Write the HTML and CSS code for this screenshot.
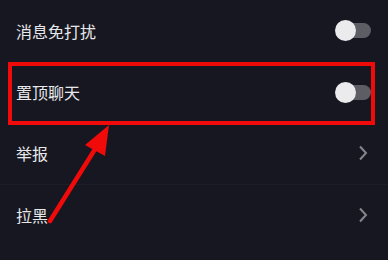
FILE: index.html
```html
<!DOCTYPE html>
<html lang="zh">
<head>
<meta charset="utf-8">
<link rel="stylesheet" href="styles.css">
</head>
<body>
<div class="screen">
  <div class="list">
    <div class="row">
      <span class="label">消息免打扰</span>
      <span class="switch"><span class="knob"></span></span>
    </div>
    <div class="row">
      <span class="label">置顶聊天</span>
      <span class="switch"><span class="knob"></span></span>
    </div>
    <div class="row sep">
      <span class="label">举报</span>
      <svg class="chev" width="10" height="16" viewBox="0 0 10 16"><path d="M2 1.5 L8 8 L2 14.5" fill="none" stroke="#85868c" stroke-width="2"/></svg>
    </div>
    <div class="row">
      <span class="label">拉黑</span>
      <svg class="chev" width="10" height="16" viewBox="0 0 10 16"><path d="M2 1.5 L8 8 L2 14.5" fill="none" stroke="#85868c" stroke-width="2"/></svg>
    </div>
  </div>
  <div class="highlight"></div>
  <svg class="arrow" width="388" height="260" viewBox="0 0 388 260">
    <line x1="50" y1="221" x2="97" y2="146" stroke="#f00a0a" stroke-width="4.5" stroke-linecap="round"/>
    <polygon points="109,125 85,145 105,156" fill="#f00a0a"/>
  </svg>
</div>
</body>
</html>
```
FILE: styles.css
```css
html, body {
  margin: 0;
  padding: 0;
  background: #161720;
}
.screen {
  position: relative;
  width: 388px;
  height: 260px;
  overflow: hidden;
  background: #161720;
  font-family: "Noto Sans CJK SC", "Noto Sans", sans-serif;
}
.list {
  display: flex;
  flex-direction: column;
}
.row {
  height: 61.5px;
  display: flex;
  align-items: center;
  justify-content: space-between;
  padding: 0 17px 0 16px;
  box-sizing: border-box;
}
.row.sep {
  border-bottom: 1px solid #1d1e28;
}
.label {
  color: #e8e8ea;
  font-size: 16px;
  line-height: 20px;
}
.switch {
  position: relative;
  width: 32px;
  height: 15px;
  border-radius: 8px;
  background: #5c5d65;
  margin-right: 0;
}
.knob {
  position: absolute;
  left: -4px;
  top: -3px;
  width: 21px;
  height: 21px;
  border-radius: 50%;
  background: #ebebed;
}
.chev {
  margin-right: 3px;
}
.highlight {
  position: absolute;
  left: 8px;
  top: 62px;
  width: 367px;
  height: 63px;
  box-sizing: border-box;
  border: 4.5px solid #f00a0a;
}
.arrow {
  position: absolute;
  left: 0;
  top: 0;
}
```
